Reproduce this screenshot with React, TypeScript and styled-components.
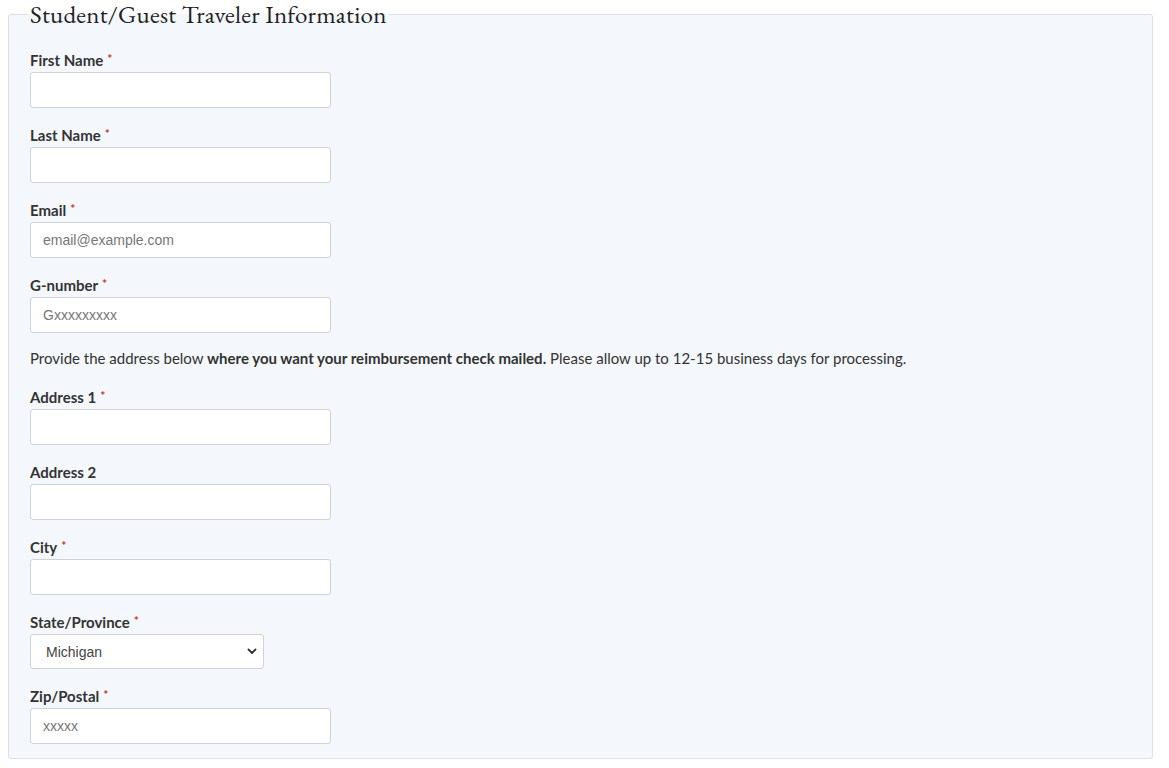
import React from "react";
import styled, { createGlobalStyle } from "styled-components";

const GlobalStyle = createGlobalStyle`
  body {
    margin: 0;
    background: #ffffff;
    font-family: Lato, "Open Sans", sans-serif;
    color: #333333;
  }
`;

const Page = styled.div`
  padding: 0 16px 20px 8px;
`;

const Fieldset = styled.fieldset`
  margin: 0;
  padding: 0 21px 14px 21px;
  border: 1px solid #dcdfe3;
  border-radius: 3px;
  background: #f4f8fc;
  min-width: 0;
`;

const Legend = styled.legend`
  padding: 0 2px;
  margin-left: -2px;
  font-family: "EB Garamond", "Liberation Serif", "DejaVu Serif", serif;
  font-size: 25px;
  line-height: 28px;
  color: #222222;
  letter-spacing: 0.25px;
`;

const Field = styled.div<{ $first?: boolean }>`
  display: flex;
  flex-direction: column;
  align-items: flex-start;
  margin-top: ${(p) => (p.$first ? "22px" : "17px")};
`;

const Label = styled.label`
  font-family: Lato, sans-serif;
  font-weight: 700;
  font-size: 15px;
  line-height: 20px;
  color: #333333;
  margin-bottom: 2px;
`;

const Required = styled.span`
  color: #c0392b;
  font-size: 12px;
  margin-left: 4px;
  vertical-align: top;
  position: relative;
  top: -1px;
`;

const Input = styled.input`
  box-sizing: border-box;
  width: 301px;
  height: 36px;
  padding: 0 12px;
  border: 1px solid #cfd3d7;
  border-radius: 3px;
  background: #ffffff;
  font-family: "Liberation Sans", Arial, sans-serif;
  font-size: 14px;
  color: #333333;
  outline: none;

  &::placeholder {
    color: #777777;
  }
`;

const SelectWrap = styled.div`
  position: relative;
  width: 234px;
`;

const Select = styled.select`
  box-sizing: border-box;
  width: 100%;
  height: 35px;
  padding: 0 28px 0 15px;
  border: 1px solid #cfd3d7;
  border-radius: 3px;
  background: #ffffff;
  font-family: "Liberation Sans", Arial, sans-serif;
  font-size: 14px;
  color: #444444;
  appearance: none;
  -webkit-appearance: none;
  outline: none;
`;

const Chevron = styled.svg`
  position: absolute;
  right: 7px;
  top: 14px;
  pointer-events: none;
`;

const Note = styled.p`
  margin: 15px 0 19px;
  font-size: 15px;
  line-height: 20px;
  color: #333333;

  strong {
    font-weight: 700;
  }
`;

type FieldDef = {
  label: string;
  required?: boolean;
  placeholder?: string;
};

const topFields: FieldDef[] = [
  { label: "First Name", required: true },
  { label: "Last Name", required: true },
  { label: "Email", required: true, placeholder: "email@example.com" },
  { label: "G-number", required: true, placeholder: "Gxxxxxxxxx" },
];

const addressFields: FieldDef[] = [
  { label: "Address 1", required: true },
  { label: "Address 2" },
  { label: "City", required: true },
];

const TextField = ({ def, first }: { def: FieldDef; first?: boolean }) => (
  <Field $first={first}>
    <Label>
      {def.label}
      {def.required && <Required>*</Required>}
    </Label>
    <Input type="text" placeholder={def.placeholder} />
  </Field>
);

const App = () => {
  return (
    <Page>
      <GlobalStyle />
      <Fieldset>
        <Legend>Student/Guest Traveler Information</Legend>
        {topFields.map((f, i) => (
          <TextField key={f.label} def={f} first={i === 0} />
        ))}
        <Note>
          Provide the address below{" "}
          <strong>where you want your reimbursement check mailed.</strong> Please
          allow up to 12-15 business days for processing.
        </Note>
        {addressFields.map((f) => (
          <TextField key={f.label} def={f} />
        ))}
        <Field>
          <Label>
            State/Province<Required>*</Required>
          </Label>
          <SelectWrap>
            <Select defaultValue="MI">
              <option value="IL">Illinois</option>
              <option value="IN">Indiana</option>
              <option value="MI">Michigan</option>
              <option value="OH">Ohio</option>
              <option value="WI">Wisconsin</option>
            </Select>
            <Chevron width="10" height="7" viewBox="0 0 10 7">
              <path
                d="M1.5 1.5 L5 5 L8.5 1.5"
                fill="none"
                stroke="#333"
                strokeWidth="1.8"
                strokeLinecap="round"
                strokeLinejoin="round"
              />
            </Chevron>
          </SelectWrap>
        </Field>
        <TextField def={{ label: "Zip/Postal", required: true, placeholder: "xxxxx" }} />
      </Fieldset>
    </Page>
  );
};

export default App;
